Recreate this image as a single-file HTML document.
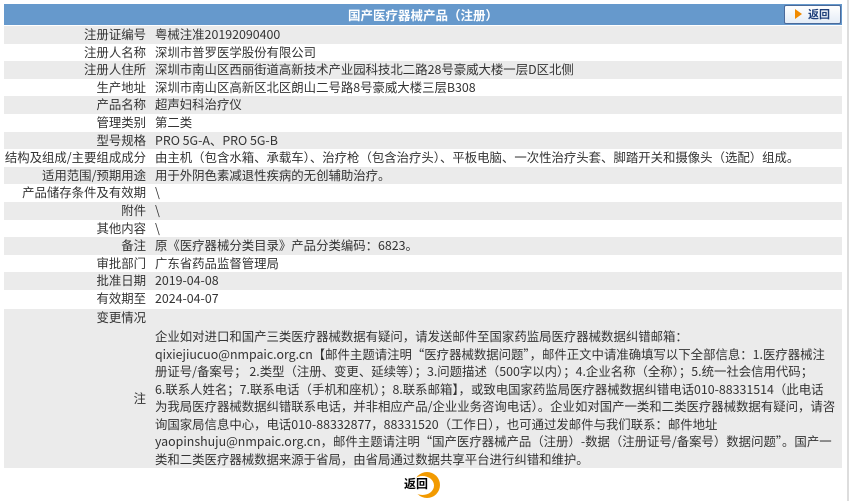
<!DOCTYPE html>
<html><head><meta charset="utf-8"><style>
body{margin:0;background:#fff;font-family:"Noto Sans CJK SC","Liberation Sans",sans-serif;font-size:12.4px;color:#333;width:850px;height:501px;overflow:hidden;position:relative}
.hdr{position:absolute;left:4px;top:4px;width:838px;height:21px;background:#6699cc;color:#fff;font-weight:bold;text-align:center;line-height:21px;font-size:12.5px}
.back{position:absolute;right:1px;top:1px;width:55px;height:17px;background:linear-gradient(#fff,#e4ecf6);border:1px solid #4a6a9a;border-radius:2px;color:#1e3f7a;line-height:17px;font-size:11px;text-align:left}
.back i{display:inline-block;width:0;height:0;border-left:7px solid #f08a00;border-top:5px solid transparent;border-bottom:5px solid transparent;margin:0 6px 0 10px;vertical-align:-1px}
.row{position:absolute;left:4px;width:838px;height:17.6px;line-height:17.6px}
.g{background:#ebebeb}
.l{position:absolute;right:696px;white-space:nowrap}
.v{position:absolute;left:151px;white-space:nowrap}
.note{position:absolute;left:4px;top:327px;width:838px;height:141px;background:#ebebeb}
.note .l{top:62px}
.note .v{top:1px;white-space:nowrap;line-height:17.5px}
.sb{position:absolute;right:1px;top:0;width:2px;height:501px;background:#ddd}
.btn{position:absolute;left:404px;top:477px;font-weight:bold;color:#000;font-size:12px;line-height:14px}
.circ{position:absolute;left:414px;top:472px;width:26px;height:26px;border-radius:50%;background:#f29a00}
.circ2{position:absolute;left:411px;top:476px;width:23px;height:19px;border-radius:50%;background:#fff}
</style></head><body>
<div class="hdr">国产医疗器械产品（注册）<div class="back"><i></i>返回</div></div>
<div class="row g" style="top:26px"><span class="l">注册证编号</span><span class="v">粤械注准20192090400</span></div>
<div class="row" style="top:43.6px"><span class="l">注册人名称</span><span class="v">深圳市普罗医学股份有限公司</span></div>
<div class="row g" style="top:61.2px"><span class="l">注册人住所</span><span class="v">深圳市南山区西丽街道高新技术产业园科技北二路28号豪威大楼一层D区北侧</span></div>
<div class="row" style="top:78.8px"><span class="l">生产地址</span><span class="v">深圳市南山区高新区北区朗山二号路8号豪威大楼三层B308</span></div>
<div class="row g" style="top:96.4px"><span class="l">产品名称</span><span class="v">超声妇科治疗仪</span></div>
<div class="row" style="top:114px"><span class="l">管理类别</span><span class="v">第二类</span></div>
<div class="row g" style="top:131.6px"><span class="l">型号规格</span><span class="v">PRO 5G-A、PRO 5G-B</span></div>
<div class="row" style="top:149.2px"><span class="l">结构及组成/主要组成成分</span><span class="v">由主机（包含水箱、承载车）、治疗枪（包含治疗头）、平板电脑、一次性治疗头套、脚踏开关和摄像头（选配）组成。</span></div>
<div class="row g" style="top:166.8px"><span class="l">适用范围/预期用途</span><span class="v">用于外阴色素减退性疾病的无创辅助治疗。</span></div>
<div class="row" style="top:184.4px"><span class="l">产品储存条件及有效期</span><span class="v">\</span></div>
<div class="row g" style="top:202px"><span class="l">附件</span><span class="v">\</span></div>
<div class="row" style="top:219.6px"><span class="l">其他内容</span><span class="v">\</span></div>
<div class="row g" style="top:237.2px"><span class="l">备注</span><span class="v">原《医疗器械分类目录》产品分类编码：6823。</span></div>
<div class="row" style="top:254.8px"><span class="l">审批部门</span><span class="v">广东省药品监督管理局</span></div>
<div class="row g" style="top:272.4px"><span class="l">批准日期</span><span class="v">2019-04-08</span></div>
<div class="row" style="top:290px"><span class="l">有效期至</span><span class="v">2024-04-07</span></div>
<div class="row g" style="top:309px"><span class="l">变更情况</span><span class="v"></span></div>
<div class="note"><span class="l">注</span><div class="v">企业如对进口和国产三类医疗器械数据有疑问，请发送邮件至国家药监局医疗器械数据纠错邮箱：<br>qixiejiucuo@nmpaic.org.cn【邮件主题请注明“医疗器械数据问题”，邮件正文中请准确填写以下全部信息：1.医疗器械注<br>册证号/备案号； 2.类型（注册、变更、延续等）；3.问题描述（500字以内）；4.企业名称（全称）；5.统一社会信用代码；<br>6.联系人姓名；7.联系电话（手机和座机）；8.联系邮箱】，或致电国家药监局医疗器械数据纠错电话010-88331514（此电话<br>为我局医疗器械数据纠错联系电话，并非相应产品/企业业务咨询电话）。企业如对国产一类和二类医疗器械数据有疑问，请咨<br>询国家局信息中心，电话010-88332877，88331520（工作日），也可通过发邮件与我们联系：邮件地址<br>yaopinshuju@nmpaic.org.cn，邮件主题请注明“国产医疗器械产品（注册）-数据（注册证号/备案号）数据问题”。国产一<br>类和二类医疗器械数据来源于省局，由省局通过数据共享平台进行纠错和维护。</div></div>
<div class="circ"></div><div class="circ2"></div>
<div class="btn">返回</div>
<div class="sb"></div>
</body></html>
